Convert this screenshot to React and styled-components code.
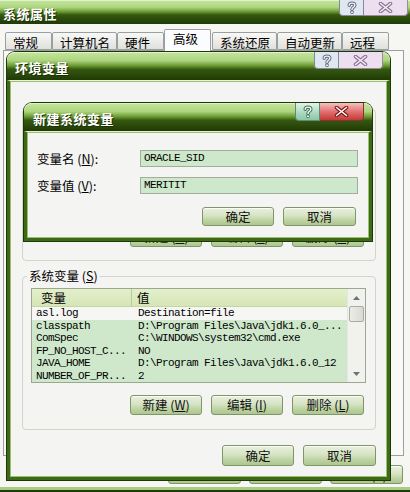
import React from "react";
import styled, { createGlobalStyle } from "styled-components";

const GlobalStyle = createGlobalStyle`
  html, body {
    margin: 0;
    padding: 0;
  }
  body {
    width: 410px;
    height: 492px;
    overflow: hidden;
    background: #f6f6f3;
    font-family: "Noto Sans CJK SC", "Liberation Sans", sans-serif;
    font-size: 12px;
    color: #000;
  }
`;

const Desktop = styled.div`
  position: relative;
  width: 410px;
  height: 492px;
  overflow: hidden;
`;

/* ---------- window chrome ---------- */

const MainWindow = styled.div`
  display: flex;
  flex-direction: column;
  height: 492px;
  box-sizing: border-box;
  background: #f6f6f3;
  border-bottom: 2px solid #203c08;
  box-shadow: inset 0 -3px 0 #a9cc84;
`;

const Window = styled.div`
  position: absolute;
  left: ${(p) => p.$x}px;
  top: ${(p) => p.$y}px;
  width: ${(p) => p.$w}px;
  display: flex;
  flex-direction: column;
  border-radius: 8px 8px 0 0;
  box-shadow: 0 0 0 1px #1d3806;
`;

const TitleBar = styled.div`
  display: flex;
  align-items: flex-start;
  justify-content: space-between;
  flex-shrink: 0;
  height: ${(p) => p.$h}px;
  border-radius: ${(p) => (p.$round ? "8px 8px 0 0" : "0")};
  background: linear-gradient(
    to bottom,
    #c4e69c 0%,
    #aed580 30%,
    #6e9d35 48%,
    #35580f 62%,
    #1f3a06 100%
  );
  box-shadow: inset 0 1px 0 rgba(255, 255, 255, 0.5);
`;

const TitleText = styled.span`
  align-self: center;
  padding: 3px 0 0 ${(p) => p.$pad}px;
  color: #fff;
  font-weight: bold;
  font-size: 13px;
  letter-spacing: 0.5px;
  text-shadow: 1px 1px 0 #1a3004;
`;

const Caption = styled.div`
  display: flex;
  margin-right: ${(p) => p.$r}px;
`;

const CapBtn = styled.div`
  box-sizing: border-box;
  width: ${(p) => p.$w}px;
  height: ${(p) => p.$h}px;
  display: flex;
  align-items: center;
  justify-content: center;
  border: 1px solid ${(p) => p.$line};
  border-top: none;
  background: ${(p) => p.$bg};

  &:first-child {
    border-radius: 0 0 0 4px;
  }
  &:last-child {
    border-left: none;
    border-radius: 0 0 4px 0;
  }
`;

const WindowBody = styled.div`
  display: flex;
  flex-direction: column;
  flex-shrink: 0;
  height: ${(p) => p.$h}px;
  box-sizing: border-box;
  overflow: hidden;
  background: #f4f4f2;
  border: 3px solid #3d6a17;
  border-top: 1px solid #e6f2d8;
  box-shadow: inset 0 0 0 1px #9cc070;
  padding: ${(p) => p.$pad};
`;

const HelpIcon = ({ line, fill }) => (
  <svg width="10" height="13" viewBox="0 0 10 13">
    <path
      d="M2.2 4.3 C2.2 1.4 7.8 1.4 7.8 4.3 C7.8 6.2 5 6.3 5 8.4"
      fill="none"
      stroke={line}
      strokeWidth="3.4"
      strokeLinecap="round"
    />
    <path
      d="M2.2 4.3 C2.2 1.4 7.8 1.4 7.8 4.3 C7.8 6.2 5 6.3 5 8.4"
      fill="none"
      stroke={fill}
      strokeWidth="1.4"
      strokeLinecap="round"
    />
    <circle cx="5" cy="11.3" r="1.5" fill={fill} stroke={line} strokeWidth="1" />
  </svg>
);

const CloseIcon = ({ line, fill }) => (
  <svg width="15" height="11" viewBox="0 0 15 11">
    <path d="M2.5 1.5 L12.5 9.5 M12.5 1.5 L2.5 9.5" stroke={line} strokeWidth="3.6" strokeLinecap="round" />
    <path d="M2.5 1.5 L12.5 9.5 M12.5 1.5 L2.5 9.5" stroke={fill} strokeWidth="1.6" strokeLinecap="round" />
  </svg>
);

const CaptionButtons = ({ h, r, active }) => (
  <Caption $r={r}>
    <CapBtn
      $w={25}
      $h={h}
      $line={active ? "#5f8a74" : "#85889a"}
      $bg={active ? "linear-gradient(#e4f5ea, #a9d8bf 60%, #8cc6a8)" : "#dfe7f1"}
    >
      <HelpIcon line={active ? "#3f6e55" : "#6a6e80"} fill={active ? "#ffffff" : "#eef2f8"} />
    </CapBtn>
    <CapBtn
      $w={44}
      $h={h}
      $line={active ? "#8a3030" : "#9a8a9a"}
      $bg={active ? "linear-gradient(#f6c0c0, #e06a6a 55%, #c23a3a)" : "#eedff0"}
    >
      <CloseIcon line={active ? "#7a1414" : "#8a7090"} fill={active ? "#ffffff" : "#f6eef8"} />
    </CapBtn>
  </Caption>
);

/* ---------- tabs ---------- */

const TabsRow = styled.div`
  display: flex;
  align-items: flex-end;
  height: 22px;
  margin-top: 4px;
  padding-left: 5px;
  position: relative;
  z-index: 1;
`;

const Tab = styled.div`
  box-sizing: border-box;
  min-width: 47px;
  height: ${(p) => (p.$active ? 22 : 18)}px;
  padding: ${(p) => (p.$active ? "1px 8px 0" : "2px 6px 0 7px")};
  margin-bottom: ${(p) => (p.$active ? -1 : 0)}px;
  margin-right: ${(p) => (p.$active ? 1 : 0)}px;
  border: 1px solid #9aa0a2;
  border-bottom: ${(p) => (p.$active ? "none" : "1px solid #9aa0a2")};
  border-radius: 2px 2px 0 0;
  background: ${(p) => (p.$active ? "#fcfcfe" : "linear-gradient(#f8f8f6, #e0e0dc)")};
  font-size: 12.5px;
  line-height: 15px;
  white-space: nowrap;
`;

const TabPanel = styled.div`
  height: 406px;
  flex-shrink: 0;
  margin: 0 6px 0 3px;
  box-sizing: border-box;
  border: 1px solid #9aa0a2;
  background: #f9f9f8;
`;

/* ---------- form parts ---------- */

const ButtonRow = styled.div`
  display: flex;
  justify-content: flex-end;
  flex-shrink: 0;
  gap: ${(p) => p.$gap || 9}px;
  margin-top: ${(p) => p.$mt}px;
  margin-right: ${(p) => p.$mr || 0}px;
`;

const Button = styled.button`
  box-sizing: border-box;
  width: ${(p) => p.$w || 72}px;
  height: ${(p) => p.$h || 20}px;
  padding: 0;
  border: 1px solid #7f9669;
  border-radius: 3px;
  background: linear-gradient(#e9f0de 0%, #d6e3c4 45%, #bcd2a0 75%, #aec690 100%);
  box-shadow: inset 0 1px 0 #fafdf6;
  font-family: "Noto Sans CJK SC", "Liberation Sans", sans-serif;
  font-size: 12.5px;
  line-height: 16px;
  color: #111;
`;

const Group = styled.fieldset`
  flex-shrink: 0;
  margin: ${(p) => p.$mt}px 11px 0 12px;
  padding: 4px 9px ${(p) => p.$pb}px 8px;
  border: 1px solid #d3d3c8;
  border-radius: 4px;
  min-width: 0;
`;

const Legend = styled.legend`
  height: 16px;
  line-height: 16px;
  padding: 0 2px;
  margin-left: -4px;
  font-size: 12.5px;
  white-space: nowrap;
`;

const ListBox = styled.div`
  display: flex;
  height: ${(p) => p.$h}px;
  border: 1px solid #9aa890;
  background: #cfe8cc;
  overflow: hidden;
`;

const ListMain = styled.div`
  flex: 1;
  min-width: 0;
  display: flex;
  flex-direction: column;
`;

const ListHeader = styled.div`
  display: grid;
  grid-template-columns: 100px 1fr;
  height: 17px;
  flex-shrink: 0;
  background: linear-gradient(#e4efcc, #d6e6b6);
  border-bottom: 1px solid #c4d6a4;
  font-size: 12.5px;
  line-height: 17px;
`;

const HeadCell = styled.div`
  padding-left: ${(p) => p.$pad}px;
  border-right: ${(p) => (p.$divider ? "1px solid #b9cc98" : "none")};
`;

const ListRow = styled.div`
  display: grid;
  grid-template-columns: 101px 1fr;
  height: 12.6px;
  flex-shrink: 0;
  background: ${(p) => (p.$plain ? "#f6f7f4" : "transparent")};
  font-family: "Liberation Mono", "DejaVu Sans Mono", monospace;
  font-size: 11px;
  letter-spacing: -0.6px;
  line-height: 12.6px;
  white-space: nowrap;
  overflow: hidden;
`;

const Cell = styled.div`
  padding-left: ${(p) => p.$pad}px;
  overflow: hidden;
`;

const ScrollBar = styled.div`
  width: 17px;
  flex-shrink: 0;
  display: flex;
  flex-direction: column;
  align-items: center;
  background: #f1f2ee;
  border-left: 1px solid #e4e6df;
`;

const Arrow = styled.div`
  height: 17px;
  display: flex;
  align-items: center;
  justify-content: center;
  flex-shrink: 0;
`;

const Thumb = styled.div`
  box-sizing: border-box;
  width: 15px;
  height: 16px;
  border: 1px solid #a9aaa6;
  border-radius: 2px;
  background: linear-gradient(to right, #ecece9, #d9d9d5);
`;

const Track = styled.div`
  flex: 1;
`;

const FormGrid = styled.div`
  display: grid;
  grid-template-columns: 103px 218px;
  row-gap: 10px;
  align-items: center;
  margin-top: 18px;
`;

const FieldLabel = styled.label`
  font-size: 12.5px;
  line-height: 17px;
`;

const TextInput = styled.div`
  box-sizing: border-box;
  height: 17px;
  padding-left: 3px;
  border: 1px solid #a4aca0;
  background: #cde8cb;
  font-family: "Liberation Mono", "DejaVu Sans Mono", monospace;
  font-size: 11px;
  letter-spacing: -0.6px;
  line-height: 15px;
`;

const Tri = ({ down }) => (
  <svg width="7" height="4" viewBox="0 0 7 4">
    <path d={down ? "M0 0 H7 L3.5 4 Z" : "M0 4 H7 L3.5 0 Z"} fill="#6f7370" />
  </svg>
);

const VarList = ({ rows, height }) => (
  <ListBox $h={height}>
    <ListMain>
      <ListHeader>
        <HeadCell $pad={9} $divider>
          变量
        </HeadCell>
        <HeadCell $pad={5}>值</HeadCell>
      </ListHeader>
      {rows.map((r, i) => (
        <ListRow key={r[0]} $plain={i === 0}>
          <Cell $pad={4}>{r[0]}</Cell>
          <Cell $pad={5}>{r[1]}</Cell>
        </ListRow>
      ))}
    </ListMain>
    <ScrollBar>
      <Arrow>
        <Tri />
      </Arrow>
      <Thumb />
      <Track />
      <Arrow>
        <Tri down />
      </Arrow>
    </ScrollBar>
  </ListBox>
);

const userRows = [
  ["TEMP", "%USERPROFILE%\\Local Settings\\Temp"],
  ["TMP", "%USERPROFILE%\\Local Settings\\Temp"],
];

const systemRows = [
  ["asl.log", "Destination=file"],
  ["classpath", "D:\\Program Files\\Java\\jdk1.6.0_..."],
  ["ComSpec", "C:\\WINDOWS\\system32\\cmd.exe"],
  ["FP_NO_HOST_C...", "NO"],
  ["JAVA_HOME", "D:\\Program Files\\Java\\jdk1.6.0_12"],
  ["NUMBER_OF_PR...", "2"],
];

const tabs = ["常规", "计算机名", "硬件", "高级", "系统还原", "自动更新", "远程"];

const App = () => {
  return (
    <Desktop>
      <GlobalStyle />

      {/* 系统属性 */}
      <MainWindow>
        <TitleBar $h={24}>
          <TitleText $pad={3}>系统属性</TitleText>
          <CaptionButtons h={16} r={2} />
        </TitleBar>
        <TabsRow>
          {tabs.map((t) => (
            <Tab key={t} $active={t === "高级"}>
              {t}
            </Tab>
          ))}
        </TabsRow>
        <TabPanel />
        <ButtonRow $mt={9} $mr={7} $gap={8}>
          <Button $w={73} $h={19}>确定</Button>
          <Button $w={73} $h={19}>取消</Button>
          <Button $w={73} $h={19}>应用(A)</Button>
        </ButtonRow>
      </MainWindow>

      {/* 环境变量 */}
      <Window $x={7} $y={52} $w={383}>
        <TitleBar $h={28} $round>
          <TitleText $pad={8}>环境变量</TitleText>
          <CaptionButtons h={17} r={7} />
        </TitleBar>
        <WindowBody $h={400} $pad="0">
          <Group $mt={20} $pb={13}>
            <Legend>
              Administrator 的用户变量 (<u>U</u>)
            </Legend>
            <VarList rows={userRows} height={91} />
            <ButtonRow $mt={13} $mr={2}>
              <Button>新建 (<u>N</u>)</Button>
              <Button>编辑 (<u>E</u>)</Button>
              <Button>删除 (<u>D</u>)</Button>
            </ButtonRow>
          </Group>
          <Group $mt={7} $pb={14}>
            <Legend>
              系统变量 (<u>S</u>)
            </Legend>
            <VarList rows={systemRows} height={93} />
            <ButtonRow $mt={12} $mr={2}>
              <Button>新建 (<u>W</u>)</Button>
              <Button>编辑 (<u>I</u>)</Button>
              <Button>删除 (<u>L</u>)</Button>
            </ButtonRow>
          </Group>
          <ButtonRow $mt={15} $mr={11}>
            <Button $w={72} $h={21}>确定</Button>
            <Button $w={73} $h={21}>取消</Button>
          </ButtonRow>
        </WindowBody>
      </Window>

      {/* 新建系统变量 */}
      <Window $x={24} $y={103} $w={348}>
        <TitleBar $h={28} $round>
          <TitleText $pad={9}>新建系统变量</TitleText>
          <CaptionButtons h={18} r={8} active />
        </TitleBar>
        <WindowBody $h={110} $pad="0 11px 0 10px">
          <FormGrid>
            <FieldLabel>
              变量名 (<u>N</u>):
            </FieldLabel>
            <TextInput>ORACLE_SID</TextInput>
            <FieldLabel>
              变量值 (<u>V</u>):
            </FieldLabel>
            <TextInput>MERITIT</TextInput>
          </FormGrid>
          <ButtonRow $mt={13} $mr={2}>
            <Button $w={72} $h={19}>确定</Button>
            <Button $w={73} $h={19}>取消</Button>
          </ButtonRow>
        </WindowBody>
      </Window>
    </Desktop>
  );
};

export default App;
